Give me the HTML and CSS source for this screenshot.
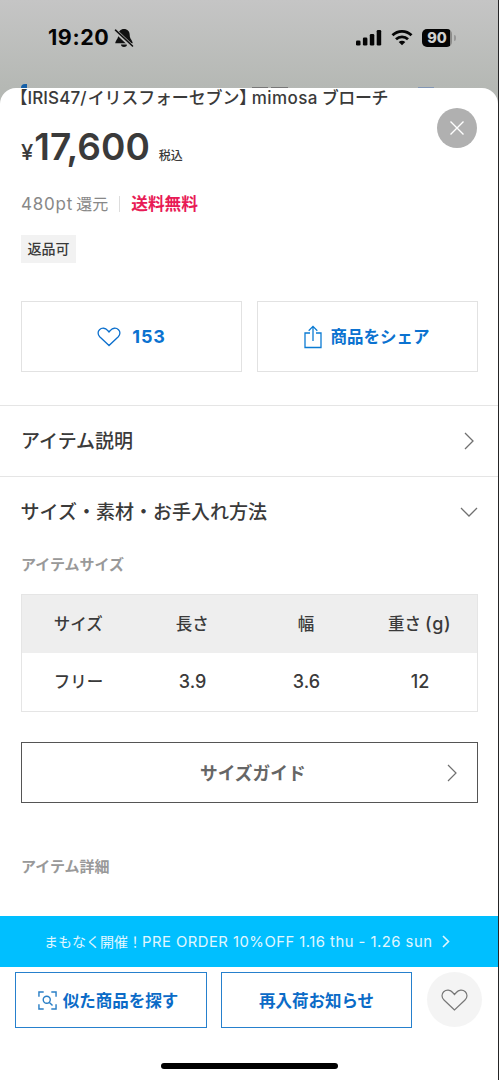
FILE: index.html
```html
<!DOCTYPE html>
<html lang="ja">
<head>
<meta charset="utf-8">
<title>mimosa ブローチ</title>
<link rel="stylesheet" href="styles.css">
</head>
<body>
<div class="screen">
  <header class="status">
    <div class="clock"><span>19:20</span>
      <svg class="bell" width="20" height="20" viewBox="0 0 20 20"><path d="M10 1C6.500 1 4.300 3.500 4.300 7c0 4-3 5.500-3 8.300h17.400c0-2.800-3-4.300-3-8.300C15.700 3.500 13.500 1 10 1zM7 16.500a3 2.400 0 0 0 6 0z" fill="#111"/><path d="M1 2.500l17 16" stroke="#bebebc" stroke-width="4"/><path d="M1.500 2.200l17 15.800" stroke="#111" stroke-width="1.600" stroke-linecap="round"/></svg>
    </div>
    <div class="signals">
      <svg width="26" height="17" viewBox="0 0 26 17"><g fill="#050505"><rect x="0" y="11.500" width="4.500" height="5" rx="1.300"/><rect x="6.900" y="8.500" width="4.500" height="8" rx="1.300"/><rect x="13.800" y="5" width="4.500" height="11.500" rx="1.300"/><rect x="20.700" y="1" width="4.500" height="15.500" rx="1.300"/></g></svg>
      <svg class="wifi" width="22" height="17" viewBox="0 0 22 17"><g fill="none" stroke="#050505" stroke-width="2.800"><path d="M1.500 6.200c5.300-5.200 13.700-5.200 19 0"/><path d="M5 10.300c3.400-3.200 8.600-3.200 12 0"/></g><path d="M7.700 13c2-1.800 4.600-1.800 6.600 0L11 16.300z" fill="#050505"/></svg>
      <div class="battery">90</div><i class="battery-tip"></i>
    </div>
    <i class="peek peek-back"></i><i class="peek peek-title"></i><i class="peek peek-mark"></i><i class="peek peek-link"></i>
  </header>

  <main class="sheet">
    <button class="close"><svg width="16" height="16" viewBox="0 0 16 16"><path d="M1.500 1.500l13 13M14.500 1.500l-13 13" stroke="#fff" stroke-width="1.400"/></svg></button>
    <h1 class="name"><span class="bracket">【</span><span class="brand">IRIS47/</span><span class="kana">イリスフォーセブン</span><span class="bracket bracket-end">】</span><span class="word">mimosa</span><span class="kana2">ブローチ</span></h1>
    <div class="price"><span class="yen">¥</span><span class="amount">17,600</span><span class="tax">税込</span></div>
    <div class="points"><span class="pt">480pt</span><span class="back">還元</span><i class="bar"></i><span class="free">送料無料</span></div>
    <span class="tag">返品可</span>
    <div class="actions">
      <button class="action"><svg width="24" height="20" viewBox="0 0 24 20"><path d="M12 18.500L2.700 9.700C.6 7.500.6 4.500 2.500 2.700c2.300-2.200 6-1.900 8 .6L12 5l1.500-1.700c2-2.500 5.700-2.800 8-.6 1.900 1.800 1.900 4.800-.2 7z" fill="none" stroke="#0b6fcd" stroke-width="1.300"/></svg><span class="count">153</span></button>
      <button class="action share"><svg width="18" height="24" viewBox="0 0 18 24"><path d="M6 8H1v14.500h16V8h-5M9 16V1.500M4.700 5.700L9 1.400l4.300 4.300" fill="none" stroke="#0b7bd3" stroke-width="1.300"/></svg><span class="lift">商品をシェア</span></button>
    </div>
    <div class="fold"><span>アイテム説明</span><svg width="10" height="18" viewBox="0 0 10 18"><path d="M1 1l8 8-8 8" fill="none" stroke="#707070" stroke-width="1.300"/></svg></div>
    <div class="fold open"><span>サイズ・素材・お手入れ方法</span><svg width="18" height="10" viewBox="0 0 18 10"><path d="M1 1l8 8 8-8" fill="none" stroke="#707070" stroke-width="1.300"/></svg></div>
    <h2 class="label">アイテムサイズ</h2>
    <div class="sizes">
      <div class="cells head"><span>サイズ</span><span>長さ</span><span>幅</span><span>重さ<b class="unit">(g)</b></span></div>
      <div class="cells"><span>フリー</span><span class="num">3.9</span><span class="num">3.6</span><span class="num">12</span></div>
    </div>
    <div class="guide"><span>サイズガイド</span><svg width="10" height="18" viewBox="0 0 10 18"><path d="M1 1l8 8-8 8" fill="none" stroke="#707070" stroke-width="1.200"/></svg></div>
    <h2 class="label detail">アイテム詳細</h2>
  </main>

  <footer>
    <div class="banner"><span class="soon">まもなく開催！</span><span class="offer">PRE ORDER 10%OFF 1.16 thu - 1.26 sun</span><svg width="8" height="13" viewBox="0 0 8 13"><path d="M1 1l5.500 5.500L1 12" fill="none" stroke="#dff7ff" stroke-width="1.600"/></svg></div>
    <div class="bottom">
      <button class="cta"><svg width="19" height="19" viewBox="0 0 20 20"><g fill="none" stroke="#2a7fc6" stroke-width="1.500"><path d="M1 6V1h5M14 1h5v5M19 14v5h-5M6 19H1v-5"/><circle cx="9.200" cy="9.200" r="3.700"/><path d="M12 12l3.300 3.300"/></g></svg><span>似た商品を探す</span></button>
      <button class="cta notify"><span>再入荷お知らせ</span></button>
      <button class="fav"><svg width="27" height="22" viewBox="0 0 27 22"><path d="M13.500 21L3 11C.4 8.500.4 5 2.700 2.800c2.600-2.500 6.700-2.100 9 .7l1.800 2 1.800-2c2.300-2.800 6.400-3.200 9-.7C26.600 5 26.600 8.500 24 11z" fill="none" stroke="#777" stroke-width="1.200"/></svg></button>
    </div>
    <div class="home"></div>
  </footer>
</div>
</body>
</html>
```
FILE: styles.css
```css
* { box-sizing: border-box; margin: 0; padding: 0; }
body { background: #252527; font-family: Inter, "Noto Sans CJK JP", sans-serif; color: #3a3a3a; }
button { font: inherit; border: 0; background: none; }
svg { display: block; flex: none; }
i { display: block; }
.screen { width: 498px; height: 1080px; overflow: hidden; display: flex; flex-direction: column; background: linear-gradient(#c5c5c5, #b5b8b4 88px); }
.status { position: relative; height: 88px; flex: none; display: flex; justify-content: space-between; align-items: flex-start; padding: 27px 42px 0 48px; }
.clock { display: flex; gap: 5px; height: 21px; align-items: center; font-weight: 700; font-size: 21.5px; color: #050505; line-height: 21px; letter-spacing: .6px; }
.signals { display: flex; align-items: center; height: 21px; }
.wifi { margin: 0 9px 0 9px; }
.battery { width: 30px; height: 18px; border-radius: 5px; background: linear-gradient(90deg, #050505 28px, #8b8b89 28px); color: #d0d0cf; font-size: 14.5px; line-height: 18px; font-weight: 800; text-align: center; }
.battery-tip { width: 2px; height: 6px; margin-left: 2px; border-radius: 0 3px 3px 0; background: #999; }
.peek { position: absolute; bottom: 0; height: 2px; background: #777; }
.peek-back { left: 21px; width: 6px; height: 4px; background: #1660a8; border-radius: 4px 0 0; }
.peek-title { left: 252px; width: 16px; height: 1px; }
.peek-mark { left: 271px; width: 17px; height: 1px; }
.peek-link { left: 418px; width: 16px; height: 1px; background: #8296b4; }
.sheet { position: relative; flex: none; height: 828px; background: #fff; border-radius: 16px 16px 0 0; display: flex; flex-direction: column; }
.close { position: absolute; right: 21px; top: 20px; width: 40px; height: 40px; border-radius: 50%; background: #b0b0b0; display: flex; align-items: center; justify-content: center; }
.name { height: 20px; padding-left: 19px; font-size: 17px; font-weight: 500; line-height: 20px; white-space: nowrap; display: flex; }
.bracket { font-feature-settings: "halt"; font-family: "Noto Sans CJK JP", sans-serif; line-height: 18px; }
.kana { margin-left: 1px; letter-spacing: -.15px; }
.brand { letter-spacing: .1px; }
.bracket-end { margin-right: 4px; }
.word { letter-spacing: .4px; }
.kana2 { margin-left: 4px; letter-spacing: -.4px; }
.price { height: 38px; margin-top: 20px; padding-left: 21px; display: flex; align-items: baseline; line-height: 38px; }
.yen { font-size: 22px; font-weight: 500; }
.amount { font-size: 37px; font-weight: 600; margin-left: 1px; }
.tax { font-size: 12px; margin-left: 9px; font-weight: 500; }
.points { height: 26px; margin-top: 25px; padding-left: 21px; display: flex; align-items: center; font-size: 17px; color: #888; line-height: 26px; }
.pt { letter-spacing: .8px; }
.back { font-size: 16px; margin-left: 3px; }
.bar { width: 1px; height: 16px; background: #ddd; margin: 0 11px; }
.free { font-size: 16.7px; font-weight: 700; color: #e81b56; }
.tag { align-self: flex-start; margin: 18px 0 0 21px; width: 55px; height: 28px; background: #f2f2f2; text-align: center; font-size: 14px; line-height: 27px; font-weight: 500; }
.actions { display: grid; grid-template-columns: 221px 221px; gap: 15px; padding-left: 21px; margin-top: 38px; }
.action { height: 71px; border: 1px solid #e2e2e2; display: flex; justify-content: center; align-items: center; gap: 11px; color: #0b72d0; font-size: 16.5px; font-weight: 700; }
.share { gap: 9px; padding-right: 2px; }
.lift { padding-bottom: 2px; }
.count { font-size: 18px; letter-spacing: .8px; }
.fold { height: 71px; display: flex; align-items: center; justify-content: space-between; padding: 0 24px 0 21px; border-top: 1px solid #e5e5e5; font-size: 19px; font-weight: 500; }
.fold span { padding-bottom: 4px; }
.actions + .fold { margin-top: 33px; }
.open { padding-right: 20px; }
.open span { margin-left: -.5px; }
.label { padding-left: 21px; margin-top: 6px; height: 24px; line-height: 24px; font-size: 15px; font-weight: 700; color: #999; }
.sizes { margin: 17px 20px 0 21px; border: 1px solid #e5e5e5; }
.cells { display: grid; grid-template-columns: repeat(4, 1fr); height: 58px; line-height: 59px; font-size: 16.5px; font-weight: 500; text-align: center; }
.cells > span { margin-left: -1px; }
.head { background: #eee; }
.cells .num { font-size: 18px; line-height: 57px; margin-left: 0; }
.unit { font-weight: 500; margin-left: 4px; font-size: 18px; letter-spacing: .6px; line-height: 1; }
.guide { position: relative; height: 61px; margin: 30px 20px 0 21px; border: 1px solid #555; padding: 0 20px 0 178px; display: flex; align-items: center; justify-content: space-between; font-size: 17.7px; font-weight: 700; color: #666; }
.guide span { padding-bottom: 2px; }
.detail { margin-top: 52px; }
footer { flex: none; height: 164px; background: #fff; }
.banner { height: 51px; background: #00bfff; color: #e0f7ff; font-size: 14px; display: flex; align-items: center; padding-left: 44px; white-space: nowrap; }
.soon { padding-bottom: 1px; width: 98px; }
.offer { font-size: 14.8px; letter-spacing: .49px; }
.banner svg { margin-left: 10px; }
.bottom { display: flex; padding: 5px 0 0 15px; }
.cta { width: 192px; height: 56px; border: 1px solid #2680cd; color: #0b6bc7; display: flex; justify-content: center; align-items: center; gap: 6px; font-size: 16.5px; font-weight: 700; padding-right: 6px; }
.notify { margin-left: 14px; width: 191px; padding: 0; }
.fav { margin-left: 15px; width: 55px; height: 55px; border-radius: 50%; background: #f4f4f4; display: flex; align-items: center; justify-content: center; }
.home { width: 177px; height: 6px; margin: 35px auto 0; border-radius: 3px; background: #000; }
```
